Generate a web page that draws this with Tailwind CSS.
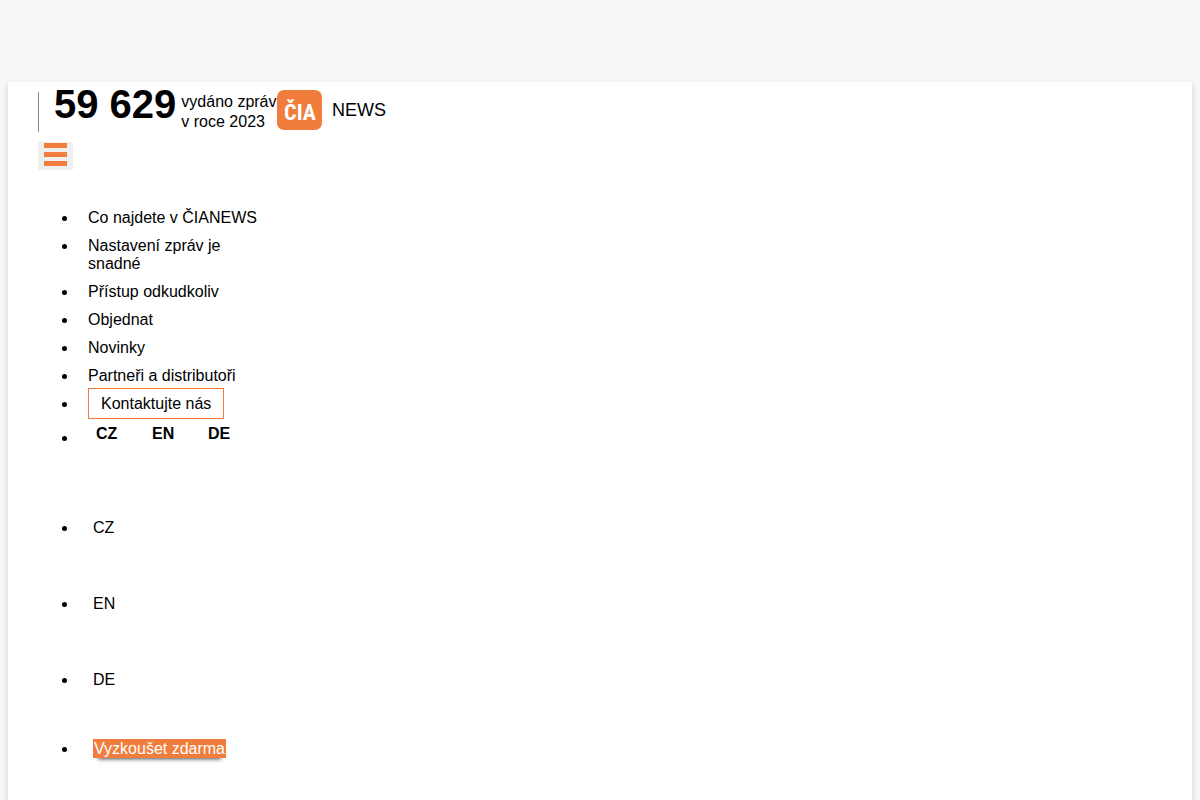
<!DOCTYPE html>
<html lang="cs">
<head>
  <meta charset="UTF-8" />
  <meta name="viewport" content="width=device-width, initial-scale=1" />
  <title>ČIANEWS</title>
  <script src="https://cdn.jsdelivr.net/npm/@tailwindcss/browser@4"></script>
</head>
<body class="flex min-h-screen flex-col bg-[#f7f7f7] px-2 pt-[82px] font-['Liberation_Sans',Arial,sans-serif] text-base leading-[18px] text-black">
  <div class="flex-1 bg-white px-[30px] pt-2 pb-10 shadow-[0_3px_6px_rgba(0,0,0,0.16)]">
    <header class="flex items-start">
      <div class="mt-0.5 flex h-10 gap-[5px] border-l border-[#888] pl-[15px]">
        <strong class="text-[40px] leading-6 whitespace-nowrap">59 629</strong>
        <span class="leading-5 whitespace-nowrap">vydáno zpráv<br />v roce 2023</span>
      </div>
      <a href="#" aria-label="ČIA NEWS">
        <svg class="block" width="110" height="40" viewBox="0 0 110 40">
          <rect width="45" height="40" rx="7" fill="#f07d3c" />
          <text x="23" y="30" text-anchor="middle" font-family="'Roboto Condensed', 'Open Sans Condensed', Roboto, sans-serif" font-weight="700" font-size="22" fill="#fff">ČIA</text>
          <text x="55" y="26" font-family="'Liberation Sans', sans-serif" font-size="18" fill="#000">NEWS</text>
        </svg>
      </a>
    </header>

    <nav class="pt-2.5">
      <button type="button" aria-label="Menu" class="flex h-7 w-[35px] flex-col items-center gap-1 bg-[#efefef] pt-px">
        <span class="h-[5px] w-[23px] bg-[#f07d3c]"></span>
        <span class="h-[5px] w-[23px] bg-[#f07d3c]"></span>
        <span class="h-[5px] w-[23px] bg-[#f07d3c]"></span>
      </button>

      <ul class="mt-[34px] w-60 list-disc pl-10">
        <li class="px-2.5 py-[5px]"><a href="#">Co najdete v ČIANEWS</a></li>
        <li class="px-2.5 py-[5px]"><a href="#">Nastavení zpráv je snadné</a></li>
        <li class="px-2.5 py-[5px]"><a href="#">Přístup odkudkoliv</a></li>
        <li class="px-2.5 py-[5px]"><a href="#">Objednat</a></li>
        <li class="px-2.5 py-[5px]"><a href="#">Novinky</a></li>
        <li class="px-2.5 py-[5px]"><a href="#">Partneři a distributoři</a></li>
        <li class="px-2.5 py-[5px]"><a href="#" class="border border-[#f07d3c] px-3 py-1.5">Kontaktujte nás</a></li>
        <!-- language switch -->
        <li class="h-[72px] pt-[7px] pl-2.5">
          <div class="inline-flex align-[4px] font-bold">
            <a href="#" class="w-14 pl-2">CZ</a>
            <a href="#" class="w-14 pl-2">EN</a>
            <a href="#" class="pl-2">DE</a>
          </div>
        </li>
        <li class="py-[29px] pl-[15px]"><a href="#">CZ</a></li>
        <li class="py-[29px] pl-[15px]"><a href="#">EN</a></li>
        <li class="py-[29px] pl-[15px]"><a href="#">DE</a></li>
        <li class="pt-[22px] pl-[15px]"><a href="#" class="bg-[#f07d3c] p-px text-white shadow-[0_6px_4px_-5px_rgba(0,0,0,0.7)]">Vyzkoušet zdarma</a></li>
      </ul>
    </nav>
  </div>
</body>
</html>
